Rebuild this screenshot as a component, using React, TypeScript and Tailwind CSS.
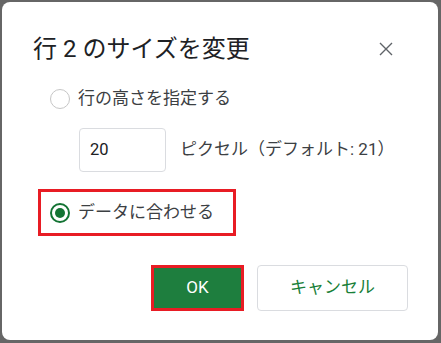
export default function App() {
  const font = { fontFamily: 'Roboto, "Noto Sans CJK JP", sans-serif' };
  return (
    <div className="w-[441px] h-[343px] bg-[#666666] p-[2px] pr-[3px]" style={font}>
      <div className="w-[436px] h-[338px] bg-white rounded-[8px] flex flex-col pl-[31px] pt-[31px] pr-[31px] text-[#202124]">
        <div className="flex items-center justify-between h-[32px]">
          <h1 className="text-[24px] leading-[32px] font-normal">行 2 のサイズを変更</h1>
          <button className="w-[24px] h-[24px] flex items-center justify-center mr-[9px] text-[#5f6368]">
            <svg width="14" height="14" viewBox="0 0 14 14">
              <path d="M1 1L13 13M13 1L1 13" stroke="currentColor" strokeWidth="1.4" />
            </svg>
          </button>
        </div>

        <label className="flex items-center h-[24px] mt-[22px] ml-[17px] gap-[8px]">
          <span className="w-[20px] h-[20px] rounded-full border-[1.5px] border-[#c6c6c6]" />
          <span className="text-[17px] text-[#3c4043]">行の高さを指定する</span>
        </label>

        <div className="flex items-center mt-[17px] ml-[46px] gap-[14px]">
          <div className="w-[87px] h-[44px] rounded-[4px] border border-[#dadce0] flex items-center px-[10px] text-[16.5px] text-[#202124]">
            20
          </div>
          <span className="text-[17px] text-[#3c4043]">ピクセル（デフォルト: 21）</span>
        </div>

        <div className="mt-[17px] ml-[5px] w-[198px] h-[47px] border-[3px] border-[#e81c24] flex items-center pl-[9px] gap-[8px]">
          <span className="w-[20px] h-[20px] rounded-full border-[2px] border-[#137333] flex items-center justify-center">
            <span className="w-[10px] h-[10px] rounded-full bg-[#137333]" />
          </span>
          <span className="text-[17px] text-[#3c4043]">データに合わせる</span>
        </div>

        <div className="flex justify-end mt-[29px] gap-[13px] mr-[-1px]">
          <button className="w-[93px] h-[46px] bg-[#1e7e3e] border-[3px] border-[#e81c24] text-white text-[17px] font-normal">
            OK
          </button>
          <button className="w-[151px] h-[46px] rounded-[4px] border border-[#dadce0] text-[#188038] text-[17px]">
            キャンセル
          </button>
        </div>
      </div>
    </div>
  );
}
